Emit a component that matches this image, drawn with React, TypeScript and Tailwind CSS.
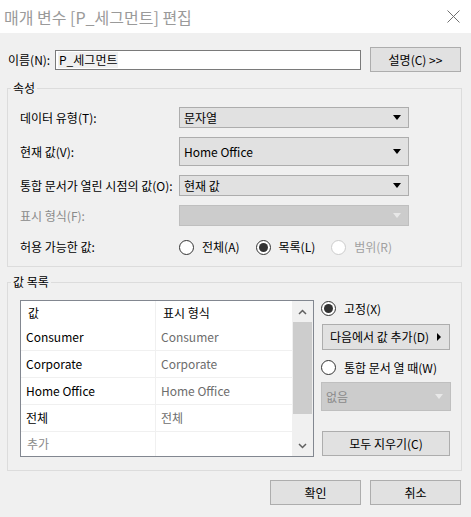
import React from "react";

const font = "font-['Noto_Sans_CJK_KR','Malgun_Gothic',sans-serif]";

type SelectProps = {
  value?: string;
  height: string;
  disabled?: boolean;
  width?: string;
};

const Arrow: React.FC<{ disabled?: boolean }> = ({ disabled }) => (
  <svg width="8" height="5" viewBox="0 0 8 5" className="shrink-0">
    <path d="M0 0 H8 L4 5 Z" fill={disabled ? "#e8e8e8" : "#000"} />
  </svg>
);

const Select: React.FC<SelectProps> = ({ value, height, disabled, width = "w-[230px]" }) => (
  <div
    className={`${width} ${height} flex items-center justify-between pl-[4px] pr-[7px] border ${
      disabled ? "bg-[#cccccc] border-[#bfbfbf] text-[#8a8a8a]" : "bg-[#e1e1e1] border-[#adadad] text-black"
    }`}
  >
    <span className="leading-none">{value}</span>
    <Arrow disabled={disabled} />
  </div>
);

const Radio: React.FC<{ checked?: boolean; disabled?: boolean; label: string }> = ({
  checked,
  disabled,
  label,
}) => (
  <label className={`flex items-center gap-[8px] ${disabled ? "text-[#a0a0a0]" : "text-black"}`}>
    <span
      className={`w-[15px] h-[15px] rounded-full border flex items-center justify-center bg-white ${
        disabled ? "border-[#cccccc]" : "border-[#333333]"
      }`}
    >
      {checked && <span className="w-[9px] h-[9px] rounded-full bg-[#333333]" />}
    </span>
    <span className="leading-none">{label}</span>
  </label>
);

const Button: React.FC<{ className?: string; children: React.ReactNode }> = ({ className, children }) => (
  <button
    className={`bg-[#e1e1e1] border border-[#adadad] flex items-center justify-center text-black leading-none ${className}`}
  >
    {children}
  </button>
);

const rows = [
  { value: "Consumer", display: "Consumer" },
  { value: "Corporate", display: "Corporate" },
  { value: "Home Office", display: "Home Office" },
  { value: "전체", display: "전체" },
];

export default function App() {
  return (
    <div className={`w-[471px] h-[517px] bg-[#f0f0f0] text-[12px] ${font} overflow-hidden`}>
      {/* 제목 표시줄 */}
      <div className="h-[33px] bg-white flex items-center justify-between pl-[4px] pr-[11px]">
        <span className="text-[16px] text-[#9a9a9a] leading-none">매개 변수 [P_세그먼트] 편집</span>
        <svg width="13" height="13" viewBox="0 0 13 13">
          <path d="M0.5 0.5 L12.5 12.5 M12.5 0.5 L0.5 12.5" stroke="#707070" strokeWidth="1" />
        </svg>
      </div>

      {/* 이름 */}
      <div className="mt-[14px] h-[25px] flex items-center pl-[8px]">
        <span className="w-[47px] leading-none">이름(N):</span>
        <div className="w-[306px] h-[20px] border border-[#7a7a7a] bg-white flex items-center pl-[2px]">
          <span className="bg-[#f0f0f0] leading-[16px] px-[1px]">P_세그먼트</span>
        </div>
        <Button className="ml-[9px] w-[91px] h-[25px]">설명(C) &gt;&gt;</Button>
      </div>

      {/* 속성 */}
      <fieldset className="mt-[8px] mx-[7px] w-[455px] h-[187px] border border-[#dcdcdc] px-[12px] pt-[11px]">
        <legend className="-ml-[9px] px-[2px] leading-[16px]">속성</legend>
        <div className="flex flex-col gap-[9px]">
          <div className="flex items-center">
            <span className="w-[159px] leading-none">데이터 유형(T):</span>
            <Select value="문자열" height="h-[21px]" />
          </div>
          <div className="flex items-center">
            <span className="w-[159px] leading-none">현재 값(V):</span>
            <Select value="Home Office" height="h-[29px]" />
          </div>
          <div className="flex items-center">
            <span className="w-[159px] leading-none">통합 문서가 열린 시점의 값(O):</span>
            <Select value="현재 값" height="h-[21px]" />
          </div>
          <div className="flex items-center">
            <span className="w-[159px] leading-none text-[#8a8a8a]">표시 형식(F):</span>
            <Select height="h-[21px]" disabled />
          </div>
          <div className="flex items-center h-[20px] mt-[2px]">
            <span className="w-[159px] leading-none">허용 가능한 값:</span>
            <div className="flex items-center gap-[16px]">
              <Radio label="전체(A)" />
              <Radio label="목록(L)" checked />
              <Radio label="범위(R)" disabled />
            </div>
          </div>
        </div>
      </fieldset>

      {/* 값 목록 */}
      <fieldset className="mt-[7px] mx-[7px] w-[455px] h-[197px] border border-[#dcdcdc] pl-[12px] pt-[10px]">
        <legend className="-ml-[9px] px-[2px] leading-[16px]">값 목록</legend>
        <div className="flex gap-[7px]">
          {/* 표 */}
          <div className="w-[294px] h-[157px] border border-[#828790] bg-white flex">
            <div className="flex-1 flex flex-col">
              <div className="h-[23px] flex">
                <div className="w-[135px] border-r border-[#f0f0f0] pl-[7px] flex items-center leading-none">값</div>
                <div className="flex-1 pl-[7px] flex items-center leading-none">표시 형식</div>
              </div>
              {rows.map((r) => (
                <div key={r.value} className="h-[27px] flex border-b border-[#f0f0f0]">
                  <div className="w-[135px] border-r border-[#f0f0f0] pl-[5px] flex items-center leading-none">
                    {r.value}
                  </div>
                  <div className="flex-1 pl-[5px] flex items-center leading-none text-[#6d6d6d]">{r.display}</div>
                </div>
              ))}
              <div className="flex-1 flex">
                <div className="w-[135px] border-r border-[#f0f0f0] pl-[6px] flex items-center leading-none text-[#8a8a8a]">
                  추가
                </div>
                <div className="flex-1" />
              </div>
            </div>
            {/* 스크롤 막대 */}
            <div className="w-[21px] bg-[#f0f0f0] flex flex-col items-center">
              <div className="h-[21px] flex items-center justify-center">
                <svg width="9" height="6" viewBox="0 0 9 6">
                  <path d="M1 5 L4.5 1.5 L8 5" fill="none" stroke="#606060" strokeWidth="1.5" />
                </svg>
              </div>
              <div className="w-[19px] h-[92px] bg-[#cdcdcd]" />
              <div className="flex-1" />
              <div className="h-[21px] flex items-center justify-center">
                <svg width="9" height="6" viewBox="0 0 9 6">
                  <path d="M1 1 L4.5 4.5 L8 1" fill="none" stroke="#606060" strokeWidth="1.5" />
                </svg>
              </div>
            </div>
          </div>

          {/* 오른쪽 */}
          <div className="w-[129px] flex flex-col">
            <div className="h-[17px] flex items-center">
              <Radio label="고정(X)" checked />
            </div>
            <Button className="mt-[7px] w-[128px] h-[26px] ml-[1px] justify-between! pl-[7px] pr-[8px]">
              <span>다음에서 값 추가(D)</span>
              <svg width="4" height="8" viewBox="0 0 4 8">
                <path d="M0 0 L4 4 L0 8 Z" fill="#000" />
              </svg>
            </Button>
            <div className="mt-[9px] h-[17px] flex items-center">
              <Radio label="통합 문서 열 때(W)" />
            </div>
            <div className="mt-[6px]">
              <Select value="없음" height="h-[29px]" disabled width="w-[130px]" />
            </div>
            <Button className="mt-[20px] ml-[1px] w-[128px] h-[25px]">모두 지우기(C)</Button>
          </div>
        </div>
      </fieldset>

      {/* 확인 / 취소 */}
      <div className="mt-[9px] flex justify-end gap-[9px] pr-[10px]">
        <Button className="w-[91px] h-[25px]">확인</Button>
        <Button className="w-[91px] h-[25px]">취소</Button>
      </div>
    </div>
  );
}
